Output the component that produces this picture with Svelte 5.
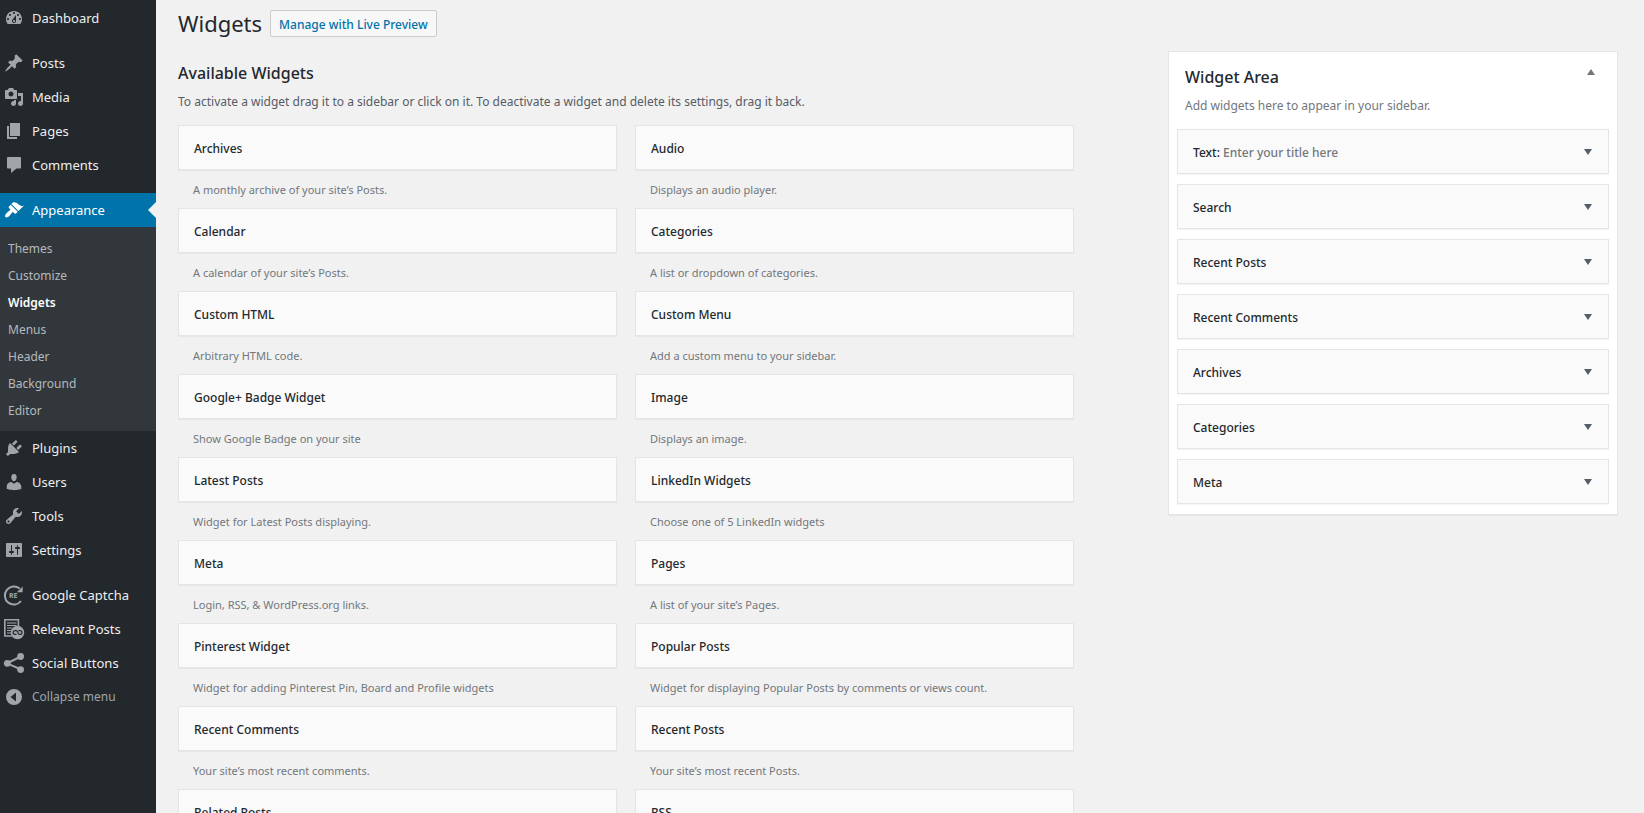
<script lang="ts">
    type Item = { label: string; icon: string; gap?: boolean; current?: boolean };

    const icons: Record<string, string> = {
        dashboard:
            "M3.76 16h12.48c1.1-1.37 1.76-3.11 1.76-5 0-4.42-3.58-8-8-8s-8 3.58-8 8c0 1.89.66 3.63 1.76 5zM10 4c.55 0 1 .45 1 1s-.45 1-1 1-1-.45-1-1 .45-1 1-1zM6 6c.55 0 1 .45 1 1s-.45 1-1 1-1-.45-1-1 .45-1 1-1zm8 0c.55 0 1 .45 1 1s-.45 1-1 1-1-.45-1-1 .45-1 1-1zm-5.37 5.55L12 7v6c0 1.1-.9 2-2 2s-2-.9-2-2c0-.57.24-1.08.63-1.45zM4 10c.55 0 1 .45 1 1s-.45 1-1 1-1-.45-1-1 .45-1 1-1zm12 0c.55 0 1 .45 1 1s-.45 1-1 1-1-.45-1-1 .45-1 1-1zm-5 3c0-.55-.45-1-1-1s-1 .45-1 1 .45 1 1 1 1-.45 1-1z",
        post: "M10.44 3.02l1.82-1.82 6.36 6.35-1.83 1.82c-1.05-.68-2.48-.57-3.41.36l-.75.75c-.92.93-1.04 2.35-.35 3.41l-1.83 1.82-2.41-2.41-2.8 2.79c-.42.42-3.38 2.71-3.8 2.29s1.86-3.39 2.28-3.81l2.79-2.79L4.1 9.36l1.83-1.82c1.05.69 2.48.57 3.4-.36l.75-.75c.93-.92 1.05-2.35.36-3.41z",
        media: "M13 11V4c0-.55-.45-1-1-1h-1.67L9 1H5L3.67 3H2c-.55 0-1 .45-1 1v7c0 .55.45 1 1 1h10c.55 0 1-.45 1-1zM7 4.5c1.38 0 2.5 1.12 2.5 2.5S8.38 9.5 7 9.5 4.5 8.38 4.5 7 5.62 4.5 7 4.5zM14 6h5v10.5c0 1.38-1.12 2.5-2.5 2.5S14 17.88 14 16.5s1.12-2.5 2.5-2.5c.17 0 .34.02.5.05V9h-3V6zm-4 8.05V13h2v3.5c0 1.38-1.12 2.5-2.5 2.5S7 17.88 7 16.5 8.12 14 9.5 14c.17 0 .34.02.5.05z",
        page: "M6 15V2h10v13H6zm-1 1h8v2H3V5h2v11z",
        comments:
            "M4 2h12c.55 0 1 .45 1 1v9.5c0 .55-.45 1-1 1h-3.5L7 18v-4.5H4c-.55 0-1-.45-1-1V3c0-.55.45-1 1-1z",
        appearance:
            "M14.48 11.06L7.41 3.99l1.5-1.5c.5-.56 2.3-.47 3.51.32 1.21.8 1.43 1.28 2.91 2.1 1.18.64 2.45 1.26 4.45.85zm-.71.71L6.7 4.7 4.93 6.47c-.39.39-.39 1.02 0 1.41l1.06 1.06c.39.39.39 1.03 0 1.42-.6.6-1.43 1.11-2.21 1.69-.35.26-.7.53-1.01.84C1.43 14.23.4 16.08 1.4 17.07c.99 1 2.84-.03 4.18-1.36.31-.31.58-.66.85-1.02.57-.78 1.08-1.61 1.69-2.21.39-.39 1.02-.39 1.41 0l1.06 1.06c.39.39 1.02.39 1.41 0z",
        plugins:
            "M13.11 4.36L9.87 7.6 8 5.73l3.24-3.24c.35-.34 1.05-.2 1.56.32.52.51.66 1.21.31 1.55zm-8 1.77l.91-1.12 9.01 9.01-1.19.84c-.71.71-2.63 1.16-3.82 1.16H6.14L4.9 17.26c-.59.59-1.54.59-2.12 0-.59-.58-.59-1.53 0-2.12l1.24-1.24v-3.88c0-1.13.4-3.19 1.09-3.89zm7.26 3.97l3.24-3.24c.34-.35 1.04-.21 1.55.31.52.51.66 1.21.31 1.55l-3.24 3.25z",
        users: "M10 9.25c-2.27 0-2.73-3.44-2.73-3.44C7 4.02 7.82 2 9.97 2c2.16 0 2.98 2.02 2.71 3.81 0 0-.41 3.44-2.68 3.44zm0 2.57L12.72 10c2.39 0 4.52 2.33 4.52 4.53v2.49s-3.65 1.13-7.24 1.13c-3.65 0-7.24-1.13-7.24-1.13v-2.49c0-2.25 1.94-4.48 4.47-4.48z",
        tools: "M16.68 9.77c-1.34 1.34-3.3 1.67-4.95.99l-5.41 6.52c-.99.99-2.59.99-3.58 0s-.99-2.59 0-3.57l6.52-5.42c-.68-1.65-.35-3.61.99-4.95 1.28-1.28 3.12-1.62 4.72-1.06l-2.89 2.89 2.82 2.82 2.86-2.87c.53 1.58.18 3.39-1.08 4.65zM3.81 16.21c.4.39 1.04.39 1.43 0 .4-.4.4-1.04 0-1.43-.39-.4-1.03-.4-1.43 0-.39.39-.39 1.03 0 1.43z",
        settings:
            "M18 16V4c0-.55-.45-1-1-1H3c-.55 0-1 .45-1 1v12c0 .55.45 1 1 1h14c.55 0 1-.45 1-1zM8 11h1c.55 0 1 .45 1 1s-.45 1-1 1H8v1.5c0 .28-.22.5-.5.5s-.5-.22-.5-.5V13H6c-.55 0-1-.45-1-1s.45-1 1-1h1V5.5c0-.28.22-.5.5-.5s.5.22.5.5V11zm5-2h-1c-.55 0-1-.45-1-1s.45-1 1-1h1V5.5c0-.28.22-.5.5-.5s.5.22.5.5V7h1c.55 0 1 .45 1 1s-.45 1-1 1h-1v5.5c0 .28-.22.5-.5.5s-.5-.22-.5-.5V9z",
        collapse: "M10 2a8 8 0 1 0 0 16 8 8 0 0 0 0-16zM12 5.5v9L6.5 10z",
    };

    const menu: Item[] = [
        { label: "Dashboard", icon: "dashboard" },
        { label: "Posts", icon: "post", gap: true },
        { label: "Media", icon: "media" },
        { label: "Pages", icon: "page" },
        { label: "Comments", icon: "comments" },
        { label: "Appearance", icon: "appearance", gap: true, current: true },
        { label: "Plugins", icon: "plugins" },
        { label: "Users", icon: "users" },
        { label: "Tools", icon: "tools" },
        { label: "Settings", icon: "settings" },
        { label: "Google Captcha", icon: "captcha", gap: true },
        { label: "Relevant Posts", icon: "relevant" },
        { label: "Social Buttons", icon: "social" },
    ];

    const submenu = ["Themes", "Customize", "Widgets", "Menus", "Header", "Background", "Editor"];

    const available = [
        ["Archives", "A monthly archive of your site’s Posts."],
        ["Audio", "Displays an audio player."],
        ["Calendar", "A calendar of your site’s Posts."],
        ["Categories", "A list or dropdown of categories."],
        ["Custom HTML", "Arbitrary HTML code."],
        ["Custom Menu", "Add a custom menu to your sidebar."],
        ["Google+ Badge Widget", "Show Google Badge on your site"],
        ["Image", "Displays an image."],
        ["Latest Posts", "Widget for Latest Posts displaying."],
        ["LinkedIn Widgets", "Choose one of 5 LinkedIn widgets"],
        ["Meta", "Login, RSS, & WordPress.org links."],
        ["Pages", "A list of your site’s Pages."],
        ["Pinterest Widget", "Widget for adding Pinterest Pin, Board and Profile widgets"],
        ["Popular Posts", "Widget for displaying Popular Posts by comments or views count."],
        ["Recent Comments", "Your site’s most recent comments."],
        ["Recent Posts", "Your site’s most recent Posts."],
        ["Related Posts", ""],
        ["RSS", ""],
    ];

    const active = [
        { name: "Text", title: "Enter your title here" },
        { name: "Search" },
        { name: "Recent Posts" },
        { name: "Recent Comments" },
        { name: "Archives" },
        { name: "Categories" },
        { name: "Meta" },
    ];

    let open = $state(true);
</script>

{#snippet icon(name: string)}
    <svg class="icon" viewBox="0 0 20 20" aria-hidden="true">
        {#if name === "captcha"}
            <path
                d="M15.6 3.6A9 9 0 1 0 17 16"
                fill="none"
                stroke="currentColor"
                stroke-width="2"
            />
            <path d="M18.6 1.4v5.8h-5.8z" />
            <text x="5" y="13" class="re">RE</text>
        {:else if name === "relevant"}
            <path
                d="M8 17H.8V.8h13.600V7"
                fill="none"
                stroke="currentColor"
                stroke-width="1.600"
            />
            <path
                d="M3 4h9.500M3 6.500h9.500M3 9h5M3 11.500h4M3 14h4"
                fill="none"
                stroke="currentColor"
                stroke-width="1.200"
            />
            <circle cx="13.500" cy="13.500" r="6.700" />
            <path
                d="M12.600 15.400h-1.500a1.900 1.900 0 0 1 0-3.800h1.200c1.600 0 1.600 3.800 3.200 3.800h.6a1.900 1.900 0 0 0 0-3.800h-1.700"
                fill="none"
                stroke="#23282d"
                stroke-width="1.200"
            />
        {:else if name === "social"}
            <path
                d="M17 3.5L3 10.3l14 6.2"
                fill="none"
                stroke="currentColor"
                stroke-width="2"
            />
            <circle cx="3.3" cy="10.3" r="3.4" />
            <circle cx="16.6" cy="3.5" r="3.4" />
            <circle cx="16.6" cy="16.6" r="3.4" />
        {:else}
            <path fill-rule="evenodd" d={icons[name]} />
        {/if}
    </svg>
{/snippet}

<div class="admin">
    <nav class="sidebar" aria-label="Main menu">
        <ul>
            {#each menu as item}
                <li class:gap={item.gap}>
                    <a href="#top" class="item" class:current={item.current}>
                        {@render icon(item.icon)}
                        <span>{item.label}</span>
                    </a>
                    {#if item.current}
                        <ul class="submenu">
                            {#each submenu as sub}
                                <li><a href="#top" class:selected={sub === "Widgets"}>{sub}</a></li>
                            {/each}
                        </ul>
                    {/if}
                </li>
            {/each}
        </ul>
        <button class="item collapse" type="button">
            {@render icon("collapse")}
            <span>Collapse menu</span>
        </button>
    </nav>

    <main>
        <header>
            <h1>Widgets</h1>
            <a class="action" href="#top">Manage with Live Preview</a>
        </header>

        <div class="columns">
            <section>
                <h2>Available Widgets</h2>
                <p class="help">
                    To activate a widget drag it to a sidebar or click on it. To deactivate a
                    widget and delete its settings, drag it back.
                </p>
                <div class="available">
                    {#each available as [name, text]}
                        <div>
                            <div class="widget"><h3>{name}</h3></div>
                            <p class="about">{text}</p>
                        </div>
                    {/each}
                </div>
            </section>

            <section class="area">
                <div class="area-head">
                    <h2>Widget Area</h2>
                    <button
                        type="button"
                        class="toggle"
                        aria-label="Toggle Widget Area"
                        aria-expanded={open}
                        onclick={() => (open = !open)}
                    >
                        <span class="arrow up"></span>
                    </button>
                </div>
                <p class="area-help">Add widgets here to appear in your sidebar.</p>
                {#if open}
                    <div class="placed">
                        {#each active as w}
                            <div class="widget">
                                <h3>
                                    {w.name}{#if w.title}:
                                        <span class="in-title">{w.title}</span>{/if}
                                </h3>
                                <button type="button" class="toggle" aria-label="Edit {w.name}">
                                    <span class="arrow"></span>
                                </button>
                            </div>
                        {/each}
                    </div>
                {/if}
            </section>
        </div>
    </main>
</div>

<style>
    :global(body) {
        background: #f1f1f1;
    }

    .admin {
        display: flex;
        height: 100vh;
        overflow: hidden;
        color: #23282d;
        font-family: "Segoe UI", "Noto Sans", "Open Sans", sans-serif;
        font-size: 13px;
        line-height: 20px;
    }

    ul,
    h1,
    h2,
    h3,
    p {
        margin: 0;
        padding: 0;
        list-style: none;
    }

    a {
        text-decoration: none;
    }

    button {
        padding: 0;
        border: 0;
        background: none;
        font: inherit;
        cursor: pointer;
    }

    .sidebar {
        flex: none;
        width: 156px;
        padding-top: 1px;
        box-sizing: border-box;
        background: #23282d;
    }

    .gap {
        margin-top: 11px;
    }

    .item {
        position: relative;
        display: flex;
        align-items: center;
        gap: 8px;
        width: 100%;
        height: 34px;
        padding-left: 4px;
        box-sizing: border-box;
        color: #eee;
        font-size: 13px;
        white-space: nowrap;
    }

    .icon {
        flex: none;
        width: 20px;
        height: 20px;
        overflow: visible;
        fill: currentColor;
        color: #a0a5aa;
    }

    .re {
        font-size: 7px;
        font-weight: 700;
    }

    .current {
        background: #0073aa;
        color: #fff;
    }

    .current .icon {
        color: #fff;
    }

    .current::after {
        content: "";
        position: absolute;
        top: 9px;
        right: 0;
        border: 8px solid transparent;
        border-left-width: 0;
        border-right-color: #f1f1f1;
    }

    .collapse {
        color: #a0a5aa;
        font-size: 12px;
    }

    .submenu {
        padding: 8px 0 7px;
        background: #32373c;
    }

    .submenu a {
        display: block;
        padding-left: 8px;
        color: #b4b9be;
        font-size: 12px;
        line-height: 27px;
    }

    .submenu .selected {
        color: #fff;
        font-weight: 600;
    }

    main {
        flex: 1;
        min-width: 0;
        padding: 10px 26px 0 22px;
    }

    header {
        display: flex;
        align-items: center;
        gap: 8px;
        height: 27px;
    }

    h1 {
        font-size: 22px;
        font-weight: 400;
        line-height: 27px;
    }

    .action {
        padding: 2px 8px 0;
        border: 1px solid #ccc;
        border-radius: 2px;
        background: #f7f7f7;
        color: #0073aa;
        font-size: 12px;
        font-weight: 500;
        line-height: 23px;
    }

    .columns {
        display: grid;
        grid-template-columns: 448fr 225fr;
        align-items: start;
        gap: 94px;
        padding-top: 14px;
    }

    h2 {
        padding-top: 12px;
        font-size: 16px;
        font-weight: 500;
        line-height: 20px;
    }

    .help {
        padding: 9px 0 13px;
        color: #555d66;
        font-size: 12px;
    }

    .available {
        display: grid;
        grid-template-columns: 1fr 1fr;
        column-gap: 18px;
    }

    .widget {
        display: flex;
        align-items: center;
        justify-content: space-between;
        height: 43px;
        padding: 0 15px;
        border: 1px solid #e5e5e5;
        background: #fafafa;
        box-shadow: 0 1px 1px rgba(0, 0, 0, 0.04);
    }

    h3 {
        padding-top: 3px;
        font-size: 12px;
        font-weight: 500;
        line-height: 20px;
    }

    .about {
        height: 28px;
        padding: 10px 15px 0;
        color: #72777c;
        font-size: 11px;
    }

    .area {
        padding: 0 8px 10px;
        border: 1px solid #e5e5e5;
        background: #fff;
        box-shadow: 0 1px 1px rgba(0, 0, 0, 0.04);
    }

    .area-head {
        display: flex;
        justify-content: space-between;
        height: 41px;
        padding: 0 8px;
    }

    .area-head h2 {
        padding-top: 15px;
    }

    .area-head .toggle {
        margin-top: 10px;
    }

    .area-help {
        padding: 3px 8px 13px;
        color: #72777c;
        font-size: 12px;
    }

    .placed {
        display: grid;
        gap: 10px;
    }

    .placed .widget {
        padding-right: 10px;
    }

    .in-title {
        color: #72777c;
    }

    .toggle {
        display: grid;
        place-items: center;
        width: 20px;
        height: 20px;
    }

    .arrow {
        border: 4px solid transparent;
        border-top: 6px solid #555d66;
        border-bottom: 0;
    }

    .arrow.up {
        border-top: 0;
        border-bottom: 6px solid #72777c;
    }
</style>
